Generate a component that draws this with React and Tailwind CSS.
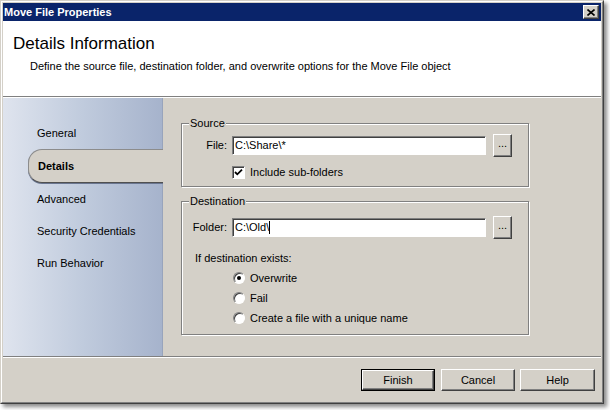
import React from 'react';

const navItems = ['General', 'Details', 'Advanced', 'Security Credentials', 'Run Behavior'];

const Sunken = ({ className = '', children }) => (
  <div
    className={`bg-white border border-t-[#808080] border-l-[#808080] border-r-white border-b-white shadow-[inset_1px_1px_0_#404040] ${className}`}
  >
    {children}
  </div>
);

const RaisedButton = ({ className = '', children }) => (
  <div
    className={`flex items-center justify-center bg-[#d4d0c8] border border-t-white border-l-white border-r-[#404040] border-b-[#404040] shadow-[inset_-1px_-1px_0_#808080] text-[11px] text-black ${className}`}
  >
    {children}
  </div>
);

const GroupBox = ({ title, className = '', children }) => (
  <div
    className={`relative border border-[#808080] shadow-[inset_1px_1px_0_#fff,1px_1px_0_#fff] ${className}`}
  >
    <span className="absolute -top-[8px] left-[7px] bg-[#d4d0c8] px-[1px] text-[11px] leading-[14px]">
      {title}
    </span>
    {children}
  </div>
);

const Radio = ({ checked, label }) => (
  <div className="flex items-center h-[20px]">
    <div className="w-[12px] h-[12px] rounded-full bg-white border border-t-[#808080] border-l-[#808080] border-r-white border-b-white shadow-[inset_1px_1px_0_#404040] flex items-center justify-center">
      {checked && <div className="w-[4px] h-[4px] rounded-full bg-black" />}
    </div>
    <span className="ml-[5px] text-[11px]">{label}</span>
  </div>
);

export default function App() {
  return (
    <div className="w-[610px] h-[410px] bg-white font-['Liberation_Sans',Arial,sans-serif] text-black">
      <div className="w-[604px] h-[404px] bg-[#d4d0c8] border border-t-[#d4d0c8] border-l-[#d4d0c8] border-r-[#404040] border-b-[#404040] shadow-[3px_3px_4px_rgba(0,0,0,0.45)]">
        <div className="w-full h-full border border-t-white border-l-white border-r-[#808080] border-b-[#808080] p-[1px] flex flex-col">
          {/* title bar */}
          <div className="h-[18px] bg-[#0a246a] flex items-center justify-between pl-[1px] pr-[2px]">
            <span className="text-white font-bold text-[11px]">Move File Properties</span>
            <RaisedButton className="w-[16px] h-[14px]">
              <svg width="8" height="7" viewBox="0 0 8 7">
                <path d="M0.5 0.5 L7.5 6.5 M7.5 0.5 L0.5 6.5" stroke="black" strokeWidth="1.6" />
              </svg>
            </RaisedButton>
          </div>

          {/* header */}
          <div className="h-[76px] bg-white border-b border-[#808080] pl-[10px] pt-[12px]">
            <div className="text-[17px] leading-[22px]">Details Information</div>
            <div className="text-[11px] leading-[14px] mt-[4px] pl-[17px]">
              Define the source file, destination folder, and overwrite options for the Move File object
            </div>
          </div>
          <div className="h-[1px] bg-white" />

          {/* main */}
          <div className="flex h-[259px] border-b border-[#808080]">
            <div className="w-[160px] bg-gradient-to-r from-[#dfe4ee] via-[#c0cbdd] to-[#a6b3cc] pt-[19px] border-r border-[#98a4bc]">
              {navItems.map((item) =>
                item === 'Details' ? (
                  <div
                    key={item}
                    className="ml-[25px] -mr-[1px] h-[34px] flex items-center pl-[9px] bg-[#d4d0c8] rounded-l-[14px] border border-r-0 border-[#8c8c8c] border-b-[#505050] shadow-[0_1px_0_#6a7690] text-[11px] font-bold"
                  >
                    {item}
                  </div>
                ) : (
                  <div key={item} className="h-[32px] flex items-center pl-[34px] text-[11px]">
                    {item}
                  </div>
                )
              )}
            </div>

            <div className="flex-1 pl-[18px] pt-[25px]">
              <GroupBox title="Source" className="w-[348px] h-[64px]">
                <div className="flex items-center mt-[10px]">
                  <span className="w-[45px] text-right text-[11px]">File:</span>
                  <Sunken className="ml-[5px] w-[254px] h-[19px] flex items-center pl-[2px] text-[11px]">
                    C:\Share\*
                  </Sunken>
                  <RaisedButton className="ml-[7px] w-[19px] h-[23px] leading-none">
                    <span className="-mt-[4px]">...</span>
                  </RaisedButton>
                </div>
                <div className="flex items-center mt-[7px] ml-[50px]">
                  <Sunken className="w-[13px] h-[13px] flex items-center justify-center">
                    <svg width="9" height="9" viewBox="0 0 9 9">
                      <path d="M1 4 L3.3 6.3 L8 1.6" stroke="black" strokeWidth="1.8" fill="none" />
                    </svg>
                  </Sunken>
                  <span className="ml-[5px] text-[11px]">Include sub-folders</span>
                </div>
              </GroupBox>

              <GroupBox title="Destination" className="w-[348px] h-[134px] mt-[14px]">
                <div className="flex items-center mt-[14px]">
                  <span className="w-[45px] text-right text-[11px]">Folder:</span>
                  <Sunken className="ml-[5px] w-[254px] h-[19px] flex items-center pl-[2px] text-[11px]">
                    C:\Old\
                    <span className="inline-block w-[1px] h-[13px] bg-black" />
                  </Sunken>
                  <RaisedButton className="ml-[7px] w-[19px] h-[23px] leading-none">
                    <span className="-mt-[4px]">...</span>
                  </RaisedButton>
                </div>
                <div className="mt-[12px] ml-[13px] text-[11px] leading-[14px]">If destination exists:</div>
                <div className="ml-[51px] mt-[3px] flex flex-col">
                  <Radio checked label="Overwrite" />
                  <Radio label="Fail" />
                  <Radio label="Create a file with a unique name" />
                </div>
              </GroupBox>
            </div>
          </div>
          <div className="h-[1px] bg-white" />

          {/* footer */}
          <div className="flex-1 flex justify-end items-start pt-[11px] pr-[6px]">
            <div className="border border-black">
              <RaisedButton className="w-[72px] h-[20px]">Finish</RaisedButton>
            </div>
            <RaisedButton className="ml-[6px] w-[74px] h-[22px]">Cancel</RaisedButton>
            <RaisedButton className="ml-[5px] w-[75px] h-[22px]">Help</RaisedButton>
          </div>
        </div>
      </div>
    </div>
  );
}
